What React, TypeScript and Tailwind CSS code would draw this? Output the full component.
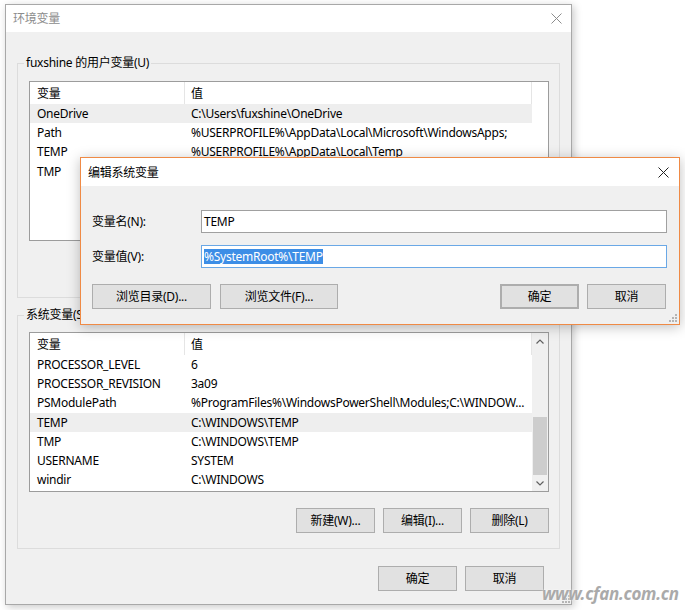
import React from "react";

type Row = [string, string];

const userRows: Row[] = [
  ["OneDrive", "C:\\Users\\fuxshine\\OneDrive"],
  ["Path", "%USERPROFILE%\\AppData\\Local\\Microsoft\\WindowsApps;"],
  ["TEMP", "%USERPROFILE%\\AppData\\Local\\Temp"],
  ["TMP", "%USERPROFILE%\\AppData\\Local\\Temp"],
];

const systemRows: Row[] = [
  ["PROCESSOR_LEVEL", "6"],
  ["PROCESSOR_REVISION", "3a09"],
  ["PSModulePath", "%ProgramFiles%\\WindowsPowerShell\\Modules;C:\\WINDOW..."],
  ["TEMP", "C:\\WINDOWS\\TEMP"],
  ["TMP", "C:\\WINDOWS\\TEMP"],
  ["USERNAME", "SYSTEM"],
  ["windir", "C:\\WINDOWS"],
];

function CloseIcon({ className }: { className: string }) {
  return (
    <svg width="11" height="11" viewBox="0 0 11 11" className={className}>
      <path d="M0.5 0.5L10.5 10.5M10.5 0.5L0.5 10.5" stroke="currentColor" strokeWidth="1" fill="none" />
    </svg>
  );
}

function Grip({ className }: { className: string }) {
  return (
    <svg width="8" height="8" viewBox="0 0 8 8" className={className}>
      <g fill="#b4b4b4">
        <rect x="6" y="0" width="2" height="2" />
        <rect x="3" y="3" width="2" height="2" />
        <rect x="6" y="3" width="2" height="2" />
        <rect x="0" y="6" width="2" height="2" />
        <rect x="3" y="6" width="2" height="2" />
        <rect x="6" y="6" width="2" height="2" />
      </g>
    </svg>
  );
}

function Chevron({ up }: { up?: boolean }) {
  return (
    <svg width="8" height="5" viewBox="0 0 8 5">
      <path
        d={up ? "M0.5 4.5L4 1L7.5 4.5" : "M0.5 0.5L4 4L7.5 0.5"}
        stroke="#606060"
        strokeWidth="1.2"
        fill="none"
      />
    </svg>
  );
}

function Btn({ children, className = "" }: { children: React.ReactNode; className?: string }) {
  return (
    <button
      className={`flex h-[25px] items-center justify-center border border-[#adadad] bg-[#e1e1e1] text-[12px] text-black ${className}`}
    >
      {children}
    </button>
  );
}

function Scrollbar() {
  return (
    <div className="flex w-[16px] flex-col bg-[#f0f0f0]">
      <div className="flex h-[17px] items-center justify-center">
        <Chevron up />
      </div>
      <div className="flex flex-1 flex-col justify-end">
        <div className="mx-auto h-[58px] w-[14px] bg-[#cdcdcd]" />
      </div>
      <div className="flex h-[16px] items-center justify-center">
        <Chevron />
      </div>
    </div>
  );
}

function ListView({ rows, selected, scroll }: { rows: Row[]; selected: string; scroll?: boolean }) {
  return (
    <div className="flex h-[160px] w-[520px] border border-[#9c9c9c] bg-white">
      <div className="flex w-[502px] flex-col">
        <div className="flex h-[22px] items-center border-r border-[#e5e5e5]">
          <div className="flex h-full w-[155px] items-center border-r border-[#e5e5e5] pl-[7px] pt-[2px]">变量</div>
          <div className="pl-[6px] pt-[2px]">值</div>
        </div>
        {rows.map(([k, v]) => (
          <div key={k + v} className={`flex h-[19.2px] items-center pt-[1px] ${k === selected ? "bg-[#eeeeee]" : ""}`}>
            <div className="w-[155px] truncate pl-[7px]">{k}</div>
            <div className="flex-1 truncate pl-[6px] pr-[4px]">{v}</div>
          </div>
        ))}
      </div>
      {scroll && <Scrollbar />}
    </div>
  );
}

function Group({ title, children, className }: { title: string; children: React.ReactNode; className: string }) {
  return (
    <fieldset className={`border border-[#dcdcdc] pl-[11px] pr-[10px] pb-[15px] ${className}`}>
      <legend className="ml-[-5px] h-[16px] px-[2px] leading-[16px]">{title}</legend>
      {children}
    </fieldset>
  );
}

export default function App() {
  return (
    <div className="relative h-[610px] w-[685px] overflow-hidden bg-white font-['Noto_Sans','Noto_Sans_CJK_SC',sans-serif] text-[12px] leading-[16px] tracking-[-0.25px] text-black">
      {/* main window */}
      <div className="absolute left-[5px] top-[4px] flex h-[601px] w-[567px] flex-col border border-[#a8a8a8] bg-[#f0f0f0] shadow-[2px_2px_8px_rgba(0,0,0,0.22)]">
        <div className="flex h-[27px] items-center justify-between bg-white pl-[7px] pr-[9px]">
          <span className="text-[#8c8c8c]">环境变量</span>
          <CloseIcon className="text-[#8c8c8c]" />
        </div>
        <div className="flex flex-1 flex-col px-[11px]">
          <Group title="fuxshine 的用户变量(U)" className="mt-[23px] pt-[10px]">
            <ListView rows={userRows} selected="OneDrive" />
            <div className="mt-[16px] flex justify-end gap-[8px]">
              <Btn className="w-[79px]">新建(N)...</Btn>
              <Btn className="w-[79px]">编辑(E)...</Btn>
              <Btn className="w-[79px]">删除(D)</Btn>
            </div>
          </Group>
          <Group title="系统变量(S)" className="mt-[9px] pt-[9px]">
            <ListView rows={systemRows} selected="TEMP" scroll />
            <div className="mt-[16px] flex justify-end gap-[8px]">
              <Btn className="w-[79px]">新建(W)...</Btn>
              <Btn className="w-[79px]">编辑(I)...</Btn>
              <Btn className="w-[79px]">删除(L)</Btn>
            </div>
          </Group>
          <div className="mt-[17px] flex justify-end gap-[8px] pr-[16px]">
            <Btn className="w-[79px]">确定</Btn>
            <Btn className="w-[79px]">取消</Btn>
          </div>
        </div>
        <Grip className="absolute bottom-[1px] right-[1px]" />
      </div>

      {/* edit dialog */}
      <div className="absolute left-[80px] top-[157px] flex h-[168px] w-[600px] flex-col border border-[#ef8a45] bg-[#f0f0f0] shadow-[0_2px_12px_rgba(0,0,0,0.25)]">
        <div className="flex h-[28px] items-center justify-between bg-white pl-[7px] pr-[10px]">
          <span className="pt-[1px]">编辑系统变量</span>
          <CloseIcon className="text-[#222222]" />
        </div>
        <div className="flex flex-1 flex-col pl-[11px] pr-[12px] pt-[24px]">
          <div className="flex items-center">
            <span className="w-[109px]">变量名(N):</span>
            <div className="flex h-[23px] flex-1 items-center border border-[#a0a0a0] bg-white pl-[2px]">TEMP</div>
          </div>
          <div className="mt-[12px] flex items-center">
            <span className="w-[109px]">变量值(V):</span>
            <div className="flex h-[23px] flex-1 items-center border border-[#6aa8e6] bg-white pl-[2px]">
              <span className="bg-[#3d8ee6] leading-[15px] text-white">%SystemRoot%\TEMP</span>
            </div>
          </div>
          <div className="mt-[16px] flex">
            <Btn className="w-[119px]">浏览目录(D)...</Btn>
            <Btn className="ml-[9px] w-[118px]">浏览文件(F)...</Btn>
            <div className="ml-auto mr-[1px] flex gap-[8px]">
              <Btn className="w-[79px] border-2 border-[#2b87d8]">确定</Btn>
              <Btn className="w-[79px]">取消</Btn>
            </div>
          </div>
        </div>
        <Grip className="absolute bottom-[2px] right-[2px]" />
      </div>

      {/* watermark */}
      <div className="absolute left-[542px] top-[585px] text-[17px] font-bold italic leading-[18px] tracking-[-0.3px] text-[#aaaaaa] [text-shadow:0_0_2px_#ffffff]">
        www.cfan.com.cn
      </div>
    </div>
  );
}
